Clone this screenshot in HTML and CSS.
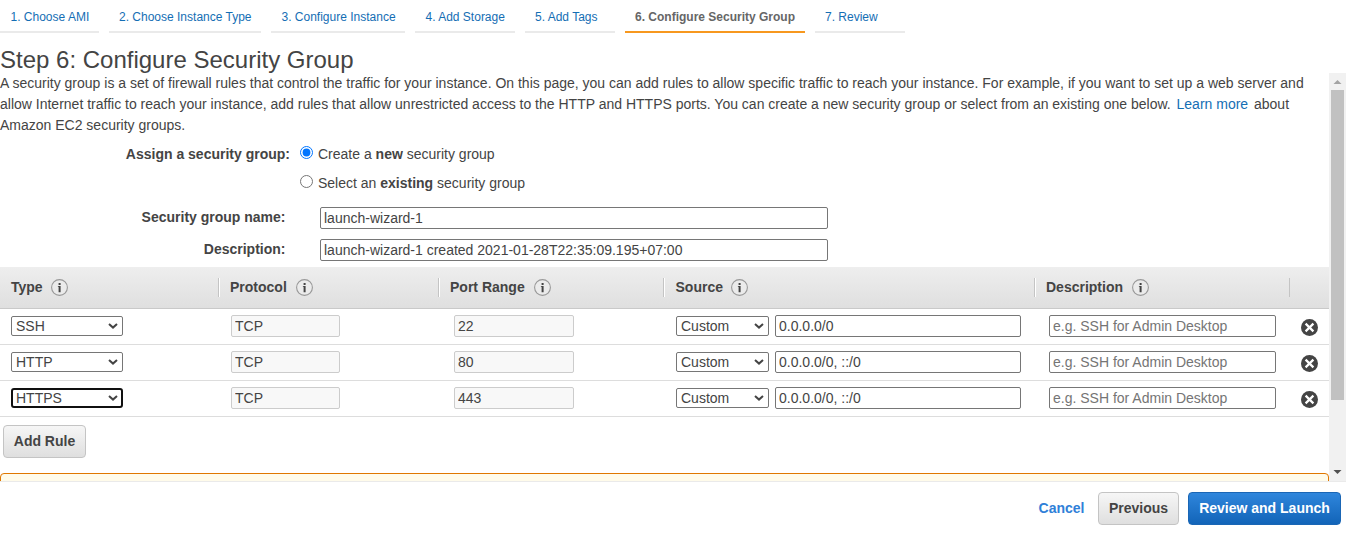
FILE: index.html
```html
<!DOCTYPE html>
<html lang="en">
<head>
<meta charset="utf-8">
<title>Configure Security Group</title>
<link rel="stylesheet" href="styles.css">
</head>
<body>
<svg class="defs" width="0" height="0">
  <symbol id="info" viewBox="0 0 17 17"><circle cx="8.5" cy="8.5" r="7.9" fill="#ebebeb" stroke="#999" stroke-width="1.1"/><path d="M7.600 4h2v2h-2zM6.900 7h2.700v6.300H7.600V7.800H6.900z" fill="#444"/></symbol>
  <symbol id="remove" viewBox="0 0 17 17"><circle cx="8.5" cy="8.5" r="8.5" fill="#444"/><path d="M4.600 4.600l7.800 7.800M12.400 4.600l-7.800 7.800" stroke="#fff" stroke-width="2.2"/></symbol>
  <symbol id="chevron" viewBox="0 0 10 6"><path d="M1 1l4 3.600L9 1" fill="none" stroke="#444" stroke-width="2"/></symbol>
</svg>
<nav class="tabs">
  <a class="tab t1">1. Choose AMI</a>
  <a class="tab t2">2. Choose Instance Type</a>
  <a class="tab t3">3. Configure Instance</a>
  <a class="tab t4">4. Add Storage</a>
  <a class="tab t5">5. Add Tags</a>
  <a class="tab t6 active">6. Configure Security Group</a>
  <a class="tab t7">7. Review</a>
</nav>
<h1>Step 6: Configure Security Group</h1>
<div class="viewport">
  <main class="content">
    <p class="intro">A security group is a set of firewall rules that control the traffic for your instance. On this page, you can add rules to allow specific traffic to reach your instance. For example, if you want to set up a web server and<br>allow Internet traffic to reach your instance, add rules that allow unrestricted access to the HTTP and HTTPS ports. You can create a new security group or select from an existing one below. <a class="learn">Learn more</a> about<br>Amazon EC2 security groups.</p>
    <form class="form">
      <div class="choice"><span class="label wide">Assign a security group:</span><input type="radio" name="sg" checked><span>Create a <b>new</b> security group</span></div>
      <div class="choice"><span class="label wide"></span><input type="radio" name="sg"><span>Select an <b>existing</b> security group</span></div>
      <div class="field"><span class="label">Security group name:</span><input class="text" value="launch-wizard-1"></div>
      <div class="field"><span class="label">Description:</span><input class="text" value="launch-wizard-1 created 2021-01-28T22:35:09.195+07:00"></div>
    </form>
    <section class="rules">
      <div class="row head">
        <div class="cell">Type<svg><use href="#info"/></svg></div>
        <div class="cell">Protocol<svg><use href="#info"/></svg></div>
        <div class="cell">Port Range<svg><use href="#info"/></svg></div>
        <div class="cell">Source<svg><use href="#info"/></svg></div>
        <div class="cell">Description<svg><use href="#info"/></svg></div>
        <div class="cell"></div>
      </div>
      <div class="row">
        <div class="cell"><span class="select">SSH<svg><use href="#chevron"/></svg></span></div>
        <div class="cell"><input class="text" disabled value="TCP"></div>
        <div class="cell port"><input class="text" disabled value="22"></div>
        <div class="cell source"><span class="select">Custom<svg><use href="#chevron"/></svg></span><input class="text" value="0.0.0.0/0"></div>
        <div class="cell desc"><input class="text" placeholder="e.g. SSH for Admin Desktop"></div>
        <div class="cell del"><svg><use href="#remove"/></svg></div>
      </div>
      <div class="row">
        <div class="cell"><span class="select">HTTP<svg><use href="#chevron"/></svg></span></div>
        <div class="cell"><input class="text" disabled value="TCP"></div>
        <div class="cell port"><input class="text" disabled value="80"></div>
        <div class="cell source"><span class="select">Custom<svg><use href="#chevron"/></svg></span><input class="text" value="0.0.0.0/0, ::/0"></div>
        <div class="cell desc"><input class="text" placeholder="e.g. SSH for Admin Desktop"></div>
        <div class="cell del"><svg><use href="#remove"/></svg></div>
      </div>
      <div class="row">
        <div class="cell"><span class="select focused">HTTPS<svg><use href="#chevron"/></svg></span></div>
        <div class="cell"><input class="text" disabled value="TCP"></div>
        <div class="cell port"><input class="text" disabled value="443"></div>
        <div class="cell source"><span class="select">Custom<svg><use href="#chevron"/></svg></span><input class="text" value="0.0.0.0/0, ::/0"></div>
        <div class="cell desc"><input class="text" placeholder="e.g. SSH for Admin Desktop"></div>
        <div class="cell del"><svg><use href="#remove"/></svg></div>
      </div>
    </section>
    <button class="btn add">Add Rule</button>
    <div class="warning"></div>
  </main>
  <div class="scrollbar">
    <svg class="up" viewBox="0 0 17 17"><path d="M4.500 11h8L8.500 7z" fill="#a3a3a3"/></svg>
    <div class="thumb"></div>
    <svg class="down" viewBox="0 0 17 17"><path d="M4.500 6h8L8.500 10z" fill="#505050"/></svg>
  </div>
</div>
<footer class="footer">
  <a class="cancel">Cancel</a>
  <button class="btn">Previous</button>
  <button class="btn primary">Review and Launch</button>
</footer>
</body>
</html>
```
FILE: styles.css
```css
* { box-sizing: border-box; }
body { margin: 0; height: 543px; overflow: hidden; background: #fff; color: #444; font: 14px/21px "Liberation Sans", Arial, sans-serif; }
.defs { display: block; }
.tabs { display: flex; gap: 10px; height: 33px; font-size: 12px; }
.tab { padding: 7px 0 0 10px; border-bottom: 2px solid #eaeaea; color: #146eb4; white-space: nowrap; }
.tab.active { color: #666; border-color: #f7981f; font-weight: bold; }
.t1 { width: 99px; padding-left: 10.5px; }
.t2 { width: 152px; }
.t3 { width: 134px; padding-left: 10.5px; }
.t4 { width: 100px; padding-left: 10.5px; }
.t5 { width: 90px; }
.t6 { width: 180px; }
.t7 { width: 90px; }
h1 { margin: 0; padding-top: 13px; height: 40px; font-size: 24px; line-height: 28px; font-weight: normal; }
.viewport { display: flex; width: 1346px; height: 409px; border-bottom: 1px solid #eaeaea; }
.content { width: 1329px; overflow: hidden; }
.intro { margin: 0; white-space: nowrap; }
.learn { color: #146eb4; margin: 0 2px; }
.form { height: 131px; padding-top: 8px; }
.choice { display: flex; height: 29px; }
.choice input { width: 13px; height: 13px; margin: 2px 5px 0 10px; }
.label { width: 285px; text-align: right; font-weight: bold; }
.label.wide { width: 290px; }
.field { display: flex; height: 32px; }
.field .label { width: 285.5px; }
.field .text { width: 508px; margin: 0 0 0 34.5px; }
.choice + .field { margin-top: 5px; }
.text { display: block; height: 22px; padding: 0 3px; border: 1px solid #767676; border-radius: 2px; background: #fff; color: #444; font: inherit; outline: none; }
.text:disabled { background: #f8f8f8; border-color: #ccc; color: #444; }
.text::placeholder { color: #757575; opacity: 1; }
.row { display: grid; grid-template-columns: 219px 220px 225px 371px 255px 39px; height: 36px; border-bottom: 1px solid #ddd; }
.cell { display: flex; align-items: flex-start; padding: 6px 0 0 12px; }
.cell:first-child { padding-left: 11px; }
.head { height: 42px; align-items: center; background: linear-gradient(#eee, #dfdfdf); border-color: #c9c9c9; font-weight: bold; }
.head .cell { align-items: center; height: 19px; padding: 0 0 0 11px; border-right: 1px solid #c4c4c4; box-shadow: 1px 0 #fff; }
.head .cell:nth-child(5) { box-shadow: none; }
.head .cell:nth-child(4) { padding-left: 11.5px; }
.head .cell:last-child { border: 0; box-shadow: none; }
.head svg { width: 17px; height: 17px; margin: 0 0 0 8.5px; }
.head .cell:nth-child(2) svg, .head .cell:nth-child(3) svg { margin-left: 9.2px; }
.cell .text { width: 109px; }
.cell.port { padding-left: 15px; }
.port .text { width: 120px; }
.source .text { width: 246px; margin-left: 6px; }
.cell.desc { padding-left: 14px; }
.desc .text { width: 227px; }
.cell.del { padding: 10px 0 0 11px; }
.del svg { width: 17px; height: 17px; }
.select { display: flex; align-items: center; justify-content: space-between; width: 112px; height: 20px; margin-top: 1px; padding: 0 4px; border: 1px solid #767676; border-radius: 2px; line-height: 18px; }
.select svg { width: 10px; height: 6px; margin-bottom: 1px; }
.select.focused { padding: 0 3px; border: 2px solid #101010; border-radius: 3px; }
.source .select { width: 93px; }
.btn { height: 33px; padding: 0; border: 1px solid #c4c4c4; border-radius: 4px; background: linear-gradient(#f6f6f6, #dfdfdf); color: #444; font: bold 14px/21px "Liberation Sans", Arial, sans-serif; width: 81px; }
.btn.add { display: block; width: 83px; margin: 8px 0 15px 3px; }
.btn.primary { width: 153px; border-color: #1a66b5; background: linear-gradient(#2f86dc, #1264b8); color: #fff; }
.warning { height: 40px; border: 1px solid #e07700; border-radius: 4px; background: #fffbea; }
.scrollbar { display: flex; flex-direction: column; align-items: center; width: 17px; background: #f1f1f1; }
.scrollbar svg { width: 17px; height: 17px; flex: none; }
.thumb { width: 13px; height: 310px; background: #c1c1c1; }
.down { margin-top: auto; }
.footer { display: flex; justify-content: flex-end; width: 1341px; padding-top: 10px; gap: 9px; }
.cancel { color: #2f80d8; font-weight: bold; margin: 6px 4.5px 0 0; }
```
